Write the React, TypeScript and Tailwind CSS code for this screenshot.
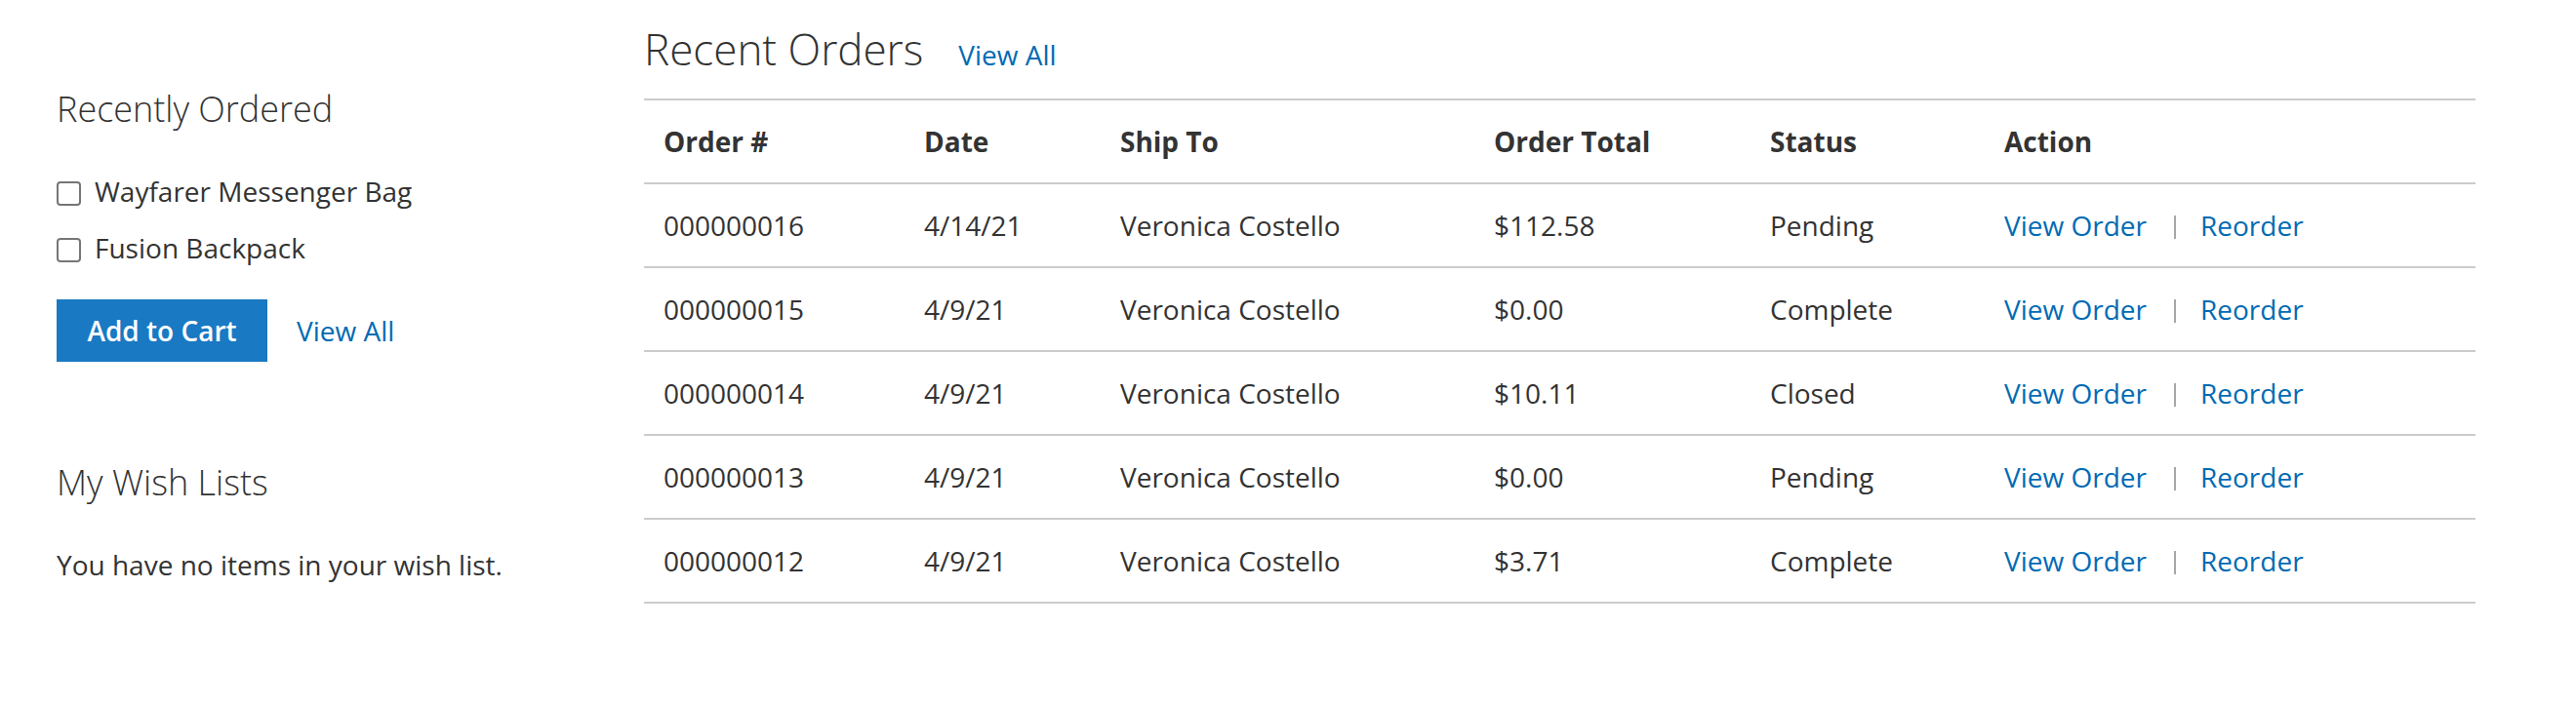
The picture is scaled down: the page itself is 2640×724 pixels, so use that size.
const orders = [
  { id: "000000016", date: "4/14/21", total: "$112.58", status: "Pending" },
  { id: "000000015", date: "4/9/21", total: "$0.00", status: "Complete" },
  { id: "000000014", date: "4/9/21", total: "$10.11", status: "Closed" },
  { id: "000000013", date: "4/9/21", total: "$0.00", status: "Pending" },
  { id: "000000012", date: "4/9/21", total: "$3.71", status: "Complete" },
];

const recent = ["Wayfarer Messenger Bag", "Fusion Backpack"];

export default function App() {
  return (
    <main className="flex min-h-screen bg-white font-['Open_Sans',sans-serif] text-[28px] leading-[40px] text-[#333]">
      {/* sidebar */}
      <aside className="w-[660px] shrink-0 pl-[58px] pt-[90px]">
        <h2 className="text-[36px] leading-[44px] font-light">Recently Ordered</h2>
        <ul className="mt-[42px] flex flex-col gap-[18px]">
          {recent.map((name) => (
            <li key={name} className="flex items-center gap-[14px]">
              <input
                type="checkbox"
                className="mt-[5px] h-[25px] w-[25px] shrink-0 appearance-none rounded-[4px] border-2 border-[#767676] bg-white"
              />
              <span>{name}</span>
            </li>
          ))}
        </ul>
        <div className="mt-[33px] flex items-center gap-[30px]">
          <button className="h-[64px] w-[216px] bg-[#1979c3] font-semibold text-white">
            Add to Cart
          </button>
          <a href="#" className="text-[#006bb4]">
            View All
          </a>
        </div>

        <h2 className="mt-[102px] text-[36px] leading-[44px] font-light">My Wish Lists</h2>
        <p className="mt-[42px]">You have no items in your wish list.</p>
      </aside>

      {/* recent orders */}
      <section className="w-[1877px] shrink-0 pt-[24px]">
        <div className="flex items-baseline">
          <h1 className="text-[44px] leading-[52px] font-light">Recent Orders</h1>
          <a href="#" className="ml-[36px] text-[#006bb4]">
            View All
          </a>
        </div>

        <table className="mt-[25px] w-full table-fixed border-separate border-spacing-0 text-left">
          <colgroup>
            <col className="w-[267px]" />
            <col className="w-[201px]" />
            <col className="w-[383px]" />
            <col className="w-[283px]" />
            <col className="w-[240px]" />
            <col className="w-[503px]" />
          </colgroup>
          <thead>
            <tr>
              {["Order #", "Date", "Ship To", "Order Total", "Status", "Action"].map((h) => (
                <th
                  key={h}
                  className="border-y-2 border-[#ccc] px-[20px] py-[22px] font-bold"
                >
                  {h}
                </th>
              ))}
            </tr>
          </thead>
          <tbody>
            {orders.map((o) => (
              <tr key={o.id}>
                <td className="border-b-2 border-[#ccc] px-[20px] py-[22px]">{o.id}</td>
                <td className="border-b-2 border-[#ccc] px-[20px] py-[22px]">{o.date}</td>
                <td className="border-b-2 border-[#ccc] px-[20px] py-[22px]">Veronica Costello</td>
                <td className="border-b-2 border-[#ccc] px-[20px] py-[22px]">{o.total}</td>
                <td className="border-b-2 border-[#ccc] px-[20px] py-[22px]">{o.status}</td>
                <td className="border-b-2 border-[#ccc] px-[20px] py-[22px] whitespace-nowrap">
                  <a href="#" className="text-[#006bb4]">
                    View Order
                  </a>
                  <span className="ml-[28px] mr-[25px] inline-block h-[24px] w-[2px] bg-[#a6a6a6] align-[-3px]" />
                  <a href="#" className="text-[#006bb4]">
                    Reorder
                  </a>
                </td>
              </tr>
            ))}
          </tbody>
        </table>
      </section>
    </main>
  );
}
